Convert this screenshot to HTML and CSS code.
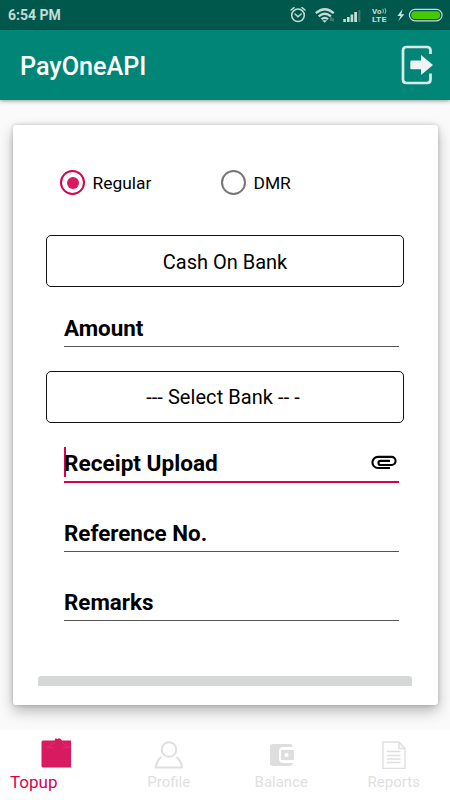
FILE: index.html
```html
<!DOCTYPE html>
<html lang="en">
<head>
<meta charset="utf-8">
<title>PayOneAPI</title>
<link rel="stylesheet" href="styles.css">
</head>
<body>
<div class="status">
  <span class="clock">6:54 PM</span>
  <svg class="status-icons" width="156" height="24" viewBox="288 3 156 24">
    <g fill="none" stroke="#c5dbd7" stroke-width="1.5" stroke-linecap="round">
      <circle cx="298" cy="15.3" r="6.3"/>
      <path d="M291 10l3-2.4M305 10l-3-2.4M295 14l3 2.8 3.2-2.8"/>
    </g>
    <g fill="none" stroke="#c5dbd7" stroke-width="2.3">
      <path d="M315.8 13.2q9-7.8 18 0M318.7 16.4q6.1-5.2 12.2 0M321.5 19.2q3.3-2.6 6.6 0"/>
    </g>
    <path d="M322.2 20.2h5l-2.5 2.5z" fill="#c5dbd7"/>
    <path d="M331 17v4M333 18.5v3" stroke="#76a19a"/>
    <path d="M343.3 19h2.6v3h-2.6zM347 17h2.6v5H347zM350.6 14.5h2.6V22h-2.6zM354.2 12h2.8v10h-2.8z" fill="#c5dbd7"/>
    <path d="M358.4 10h2v12h-2z" fill="#367d72"/>
    <g fill="#c5dbd7" class="volte"><text x="372" y="13.8" textLength="9.5" lengthAdjust="spacingAndGlyphs">Vo</text><text x="372" y="22.4" textLength="14.5" lengthAdjust="spacingAndGlyphs">LTE</text></g>
    <path d="M382.8 8.9q1.4 2 0 4.2M384.9 8.2q2 2.7 0 5.6" fill="none" stroke="#9fc2bb"/>
    <path d="M402.6 9l-5.2 7h3.2l-2.2 5 6-6.8h-3.2z" fill="#d2e3e0"/>
    <rect x="409.4" y="9.4" width="32.7" height="11.4" rx="5.7" fill="#00584c" stroke="#c5dbd7" stroke-width="1.2"/>
    <rect x="411.2" y="11.2" width="29" height="7.8" rx="3.9" fill="#48c800"/>
  </svg>
</div>
<header class="toolbar">
  <h1>PayOneAPI</h1>
  <svg width="34" height="40" viewBox="400 45 34 40">
    <path d="M430.5 54v-3.5q0-3.5-3.5-3.5h-20.5q-3.500 0-3.500 3.500v29q0 3.500 3.500 3.500h20.500q3.500 0 3.500-3.500v-6" fill="none" stroke="#d8ebe8" stroke-width="2.700"/>
    <path d="M411.500 60.500h9.500v-5.500l12 10-12 10v-5.800h-9.500q-1.200 0-1.200-1.200v-6.200q0-1.300 1.200-1.300z" fill="#eef4f4"/>
  </svg>
</header>
<main>
  <section class="card">
    <div class="radios">
      <div class="radio checked"><i></i><span>Regular</span></div>
      <div class="radio"><i></i><span>DMR</span></div>
    </div>
    <div class="spinner cash">Cash On Bank</div>
    <div class="field amount"><span>Amount</span></div>
    <div class="spinner bank">--- Select Bank -- -</div>
    <div class="field receipt"><b class="caret"></b><span>Receipt Upload</span>
      <svg width="29" height="16" viewBox="370 454 29 16">
        <path d="M390 468h-12a5.500 5.500 0 0 1 0-11.100h13.500a4 4 0 0 1 0 8.100h-11a2 2 0 0 1 0-4.100h9.500" fill="none" stroke="#000" stroke-width="2.100"/>
      </svg>
    </div>
    <div class="field reference"><span>Reference No.</span></div>
    <div class="field remarks"><span>Remarks</span></div>
    <div class="submit"></div>
  </section>
</main>
<nav>
  <div class="tab topup">
    <svg width="32" height="32" viewBox="40 737 32 32">
      <path d="M43 740.500h11.500l1-2.300 2 .8 1.200-.8 2 .7 1.300 1.600h9V767.500H43q-1.500 0-1.500-1.500v-24q0-1.500 1.500-1.500z" fill="#d81b60"/>
      <path d="M47 747.500l7.500-5M62 742.500l7.500 5M47 747.500h6M63 747.500h6" stroke="#e03a74" stroke-width=".6" fill="none"/>
    </svg>
    <span>Topup</span>
  </div>
  <div class="tab profile">
    <svg width="32" height="32" viewBox="153 737 32 32" fill="none" stroke="#dfdfdf" stroke-width="2">
      <circle cx="169" cy="749.500" r="7.300"/>
      <path d="M161.300 757q-4.500 3-5.500 10.500h26.200q-1-7.500-5.500-10.500"/>
    </svg>
    <span>Profile</span>
  </div>
  <div class="tab balance">
    <svg width="32" height="32" viewBox="265 737 32 32">
      <path d="M273 744h17q2.500 0 2.500 3h-9q-4.500 0-4.500 4v8q0 4 4.500 4h9q0 3-2.500 3h-17q-3 0-3-3v-16q0-3 3-3z" fill="#dedede"/>
      <path fill-rule="evenodd" d="M281 750h13v10h-13zM286.500 753a2 2 0 1 0 0 4 2 2 0 0 0 0-4z" fill="#dedede"/>
    </svg>
    <span>Balance</span>
  </div>
  <div class="tab reports">
    <svg width="32" height="32" viewBox="378 737 32 32" fill="none" stroke="#dfdfdf" stroke-width="1.400">
      <path d="M383 742h16l6 6.500v20h-22zM399 742v6.500h6M387 751.500h13.500M387 755.500h13.500M387 759h13.500M387 762.500h13.500"/>
    </svg>
    <span>Reports</span>
  </div>
</nav>
</body>
</html>
```
FILE: styles.css
```css
* { box-sizing: border-box; }
body {
  margin: 0;
  width: 450px;
  height: 800px;
  display: flex;
  flex-direction: column;
  overflow: hidden;
  background: #fafafa;
  font-family: Roboto, "Liberation Sans", sans-serif;
  color: #000;
}
svg { display: block; flex: none; }
.status {
  height: 30px;
  flex: none;
  padding: 0 6px 0 8px;
  display: flex;
  align-items: center;
  justify-content: space-between;
  background: #00584c;
}
.clock { color: #c5dbd7; font-size: 14px; font-weight: 700; }
.volte { font-size: 7px; font-weight: 700; }
.toolbar {
  height: 70px;
  flex: none;
  padding: 0 16px 0 20px;
  display: flex;
  align-items: center;
  justify-content: space-between;
  background: #008577;
  box-shadow: 0 1px 4px rgba(0, 0, 0, .4);
}
h1 { margin: 3px 0 0; color: #fff; font-size: 25.2px; font-weight: 500; line-height: 30px; }
main { height: 630px; flex: none; padding: 25px 12.5px; }
.card {
  height: 580px;
  padding: 45px 33.5px 0;
  background: #fff;
  border-radius: 3px;
  box-shadow: 0 6px 14px rgba(0, 0, 0, .28), 0 0 4px rgba(0, 0, 0, .2);
}
.radios { display: flex; height: 25px; margin-left: 14px; }
.radio { width: 161px; display: flex; align-items: center; gap: 7.5px; font-size: 17.4px; }
.radio i {
  width: 25px;
  height: 25px;
  display: flex;
  flex: none;
  align-items: center;
  justify-content: center;
  border: 2.5px solid #757575;
  border-radius: 50%;
}
.radio span { margin-top: 1px; }
.checked i { border-color: #d8004f; }
.checked i::after { content: ""; width: 12px; height: 12px; border-radius: 50%; background: #d81b60; }
.spinner {
  height: 52px;
  padding-top: 1px;
  border: 1px solid #111;
  border-radius: 5px;
  display: flex;
  align-items: center;
  justify-content: center;
  font-size: 20px;
}
.cash { margin-top: 40px; }
.bank { margin-top: 24px; padding: 0 4px 0 0; letter-spacing: .06px; }
.field {
  width: 335px;
  margin-left: 18px;
  display: flex;
  align-items: center;
  border-bottom: 1px solid #555;
  font-size: 22.4px;
  font-weight: 700;
}
.amount { height: 35px; margin-top: 25px; }
.amount span, .reference span, .remarks span { margin-top: -3px; }
.receipt { height: 37px; margin-top: 23px; border-bottom: 2px solid #d8004f; }
.receipt span { font-size: 22.6px; }
.receipt svg { margin: -4px 0 0 auto; }
.caret { width: 2px; height: 30px; margin: -4px -2px 0 0; background: #d8004f; }
.reference { height: 35px; margin-top: 34px; }
.remarks { height: 35px; margin-top: 34px; }
.submit { width: 374px; height: 10px; margin: 55px 0 0 -8px; border-radius: 3px 3px 0 0; background: #d6d7d7; }
nav { height: 70px; flex: none; display: flex; background: #fff; }
.tab { width: 112.5px; padding-top: 7px; display: flex; flex-direction: column; align-items: center; color: #dfdfdf; font-size: 15px; }
.tab span { line-height: 20px; margin-top: 3px; }
.topup span { color: #d8004f; font-size: 17px; align-self: flex-start; margin-left: 10px; }
```
